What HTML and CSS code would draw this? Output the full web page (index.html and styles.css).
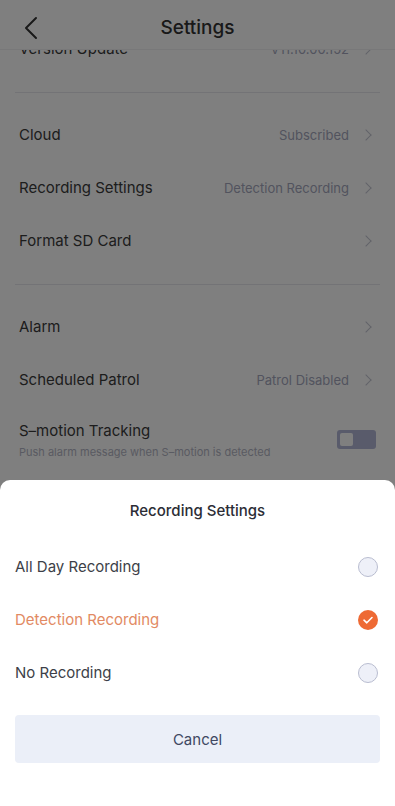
FILE: index.html
```html
<!DOCTYPE html>
<html>
<head>
<meta charset="utf-8">
<link rel="stylesheet" href="styles.css">
</head>
<body>
<div class="page">
  <header class="topbar">
    <svg class="back" width="16" height="24" viewBox="0 0 16 24"><path d="M13 2 L3 12 L13 22" fill="none" stroke="#333" stroke-width="2" stroke-linecap="round" stroke-linejoin="round"/></svg>
    <div class="title">Settings</div>
  </header>
  <div class="scroll">
    <div class="scroll-inner">
      <div class="row version">
        <span class="label">Version Update</span>
        <span class="value">V11.10.00.152</span>
        <span class="chev"></span>
      </div>
      <div class="sep"><div class="line"></div></div>
      <div class="row"><span class="label">Cloud</span><span class="value">Subscribed</span><span class="chev"></span></div>
      <div class="row"><span class="label">Recording Settings</span><span class="value">Detection Recording</span><span class="chev"></span></div>
      <div class="row"><span class="label">Format SD Card</span><span class="value"></span><span class="chev"></span></div>
      <div class="sep"><div class="line"></div></div>
      <div class="row"><span class="label">Alarm</span><span class="value"></span><span class="chev"></span></div>
      <div class="row"><span class="label">Scheduled Patrol</span><span class="value">Patrol Disabled</span><span class="chev"></span></div>
      <div class="row tall">
        <div class="labels">
          <span class="label">S–motion Tracking</span>
          <span class="sub">Push alarm message when S–motion is detected</span>
        </div>
        <span class="toggle"><span class="knob"></span></span>
      </div>
    </div>
  </div>
  <div class="overlay"></div>
  <div class="sheet">
    <div class="sheet-title">Recording Settings</div>
    <div class="opt"><span>All Day Recording</span><span class="radio"></span></div>
    <div class="opt active"><span>Detection Recording</span><span class="radio on"><svg width="20" height="20" viewBox="0 0 20 20"><path d="M6 10.2 L8.8 12.8 L14 7.5" fill="none" stroke="#fff" stroke-width="1.6" stroke-linecap="round" stroke-linejoin="round"/></svg></span></div>
    <div class="opt"><span>No Recording</span><span class="radio"></span></div>
    <div class="cancel">Cancel</div>
  </div>
</div>
</body>
</html>
```

FILE: styles.css
```css
html, body {
  margin: 0;
  padding: 0;
}
body {
  width: 395px;
  height: 806px;
  overflow: hidden;
  font-family: Inter, Roboto, "Noto Sans", "Liberation Sans", sans-serif;
  background: #fff;
}
.page {
  position: relative;
  width: 395px;
  height: 806px;
  display: flex;
  flex-direction: column;
  background: #fff;
  overflow: hidden;
}
.topbar {
  height: 50px;
  flex: 0 0 50px;
  display: flex;
  align-items: center;
  justify-content: center;
  position: relative;
  border-bottom: 1px solid #f0f0f2;
  box-sizing: border-box;
  z-index: 2;
  background: #fff;
}
.back {
  position: absolute;
  left: 23px;
  top: 16px;
}
.title {
  font-size: 19px;
  font-weight: 500;
  color: #333;
  margin-top: 6px;
}
.scroll {
  flex: 1;
  overflow: hidden;
}
.scroll-inner {
  margin-top: -28px;
}
.row {
  height: 53px;
  display: flex;
  align-items: center;
  padding: 0 19px;
  box-sizing: border-box;
}
.row .label {
  font-size: 15px;
  color: #3a3a3a;
  flex: 1;
}
.row .value {
  font-size: 13px;
  color: #a4a7bd;
  margin-right: 13px;
}
.chev {
  width: 7px;
  height: 7px;
  border-top: 1.3px solid #c4c6d2;
  border-right: 1.3px solid #c4c6d2;
  transform: rotate(45deg);
  margin-right: 6px;
}
.sep {
  padding: 17px 15px 15px;
}
.line {
  height: 1px;
  background: #e6e7ec;
}
.row.tall {
  height: 72px;
  align-items: flex-start;
  padding-top: 15px;
}
.labels {
  flex: 1;
  display: flex;
  flex-direction: column;
}
.sub {
  font-size: 11px;
  color: #b3b5c4;
  margin-top: 5px;
}
.toggle {
  width: 39px;
  height: 19px;
  border-radius: 3px;
  background: #b2b7d6;
  margin-top: 9px;
  display: flex;
  align-items: center;
  padding-left: 3px;
  box-sizing: border-box;
}
.knob {
  width: 13px;
  height: 13px;
  border-radius: 2px;
  background: #fff;
}
.overlay {
  position: absolute;
  inset: 0;
  background: rgba(0, 0, 0, 0.5);
  z-index: 5;
}
.sheet {
  position: absolute;
  left: 0;
  right: 0;
  bottom: 0;
  height: 326px;
  background: #fff;
  border-radius: 10px 10px 0 0;
  z-index: 6;
  display: flex;
  flex-direction: column;
}
.sheet-title {
  height: 60px;
  display: flex;
  align-items: center;
  justify-content: center;
  font-size: 15px;
  font-weight: 500;
  color: #2b2d36;
}
.opt {
  height: 53px;
  display: flex;
  align-items: center;
  justify-content: space-between;
  padding: 0 17px 0 15px;
  font-size: 15px;
  color: #3d3f48;
}
.opt.active {
  color: #e28a63;
}
.radio {
  width: 18px;
  height: 18px;
  border-radius: 50%;
  border: 1px solid #b9bdd0;
  background: #eef0f8;
  display: flex;
  align-items: center;
  justify-content: center;
}
.radio.on {
  width: 20px;
  height: 20px;
  border: none;
  background: #ee6a34;
}
.cancel {
  margin: 16px 15px 0;
  height: 48px;
  border-radius: 4px;
  background: #ebeff8;
  display: flex;
  align-items: center;
  justify-content: center;
  font-size: 15px;
  color: #404862;
}
```
